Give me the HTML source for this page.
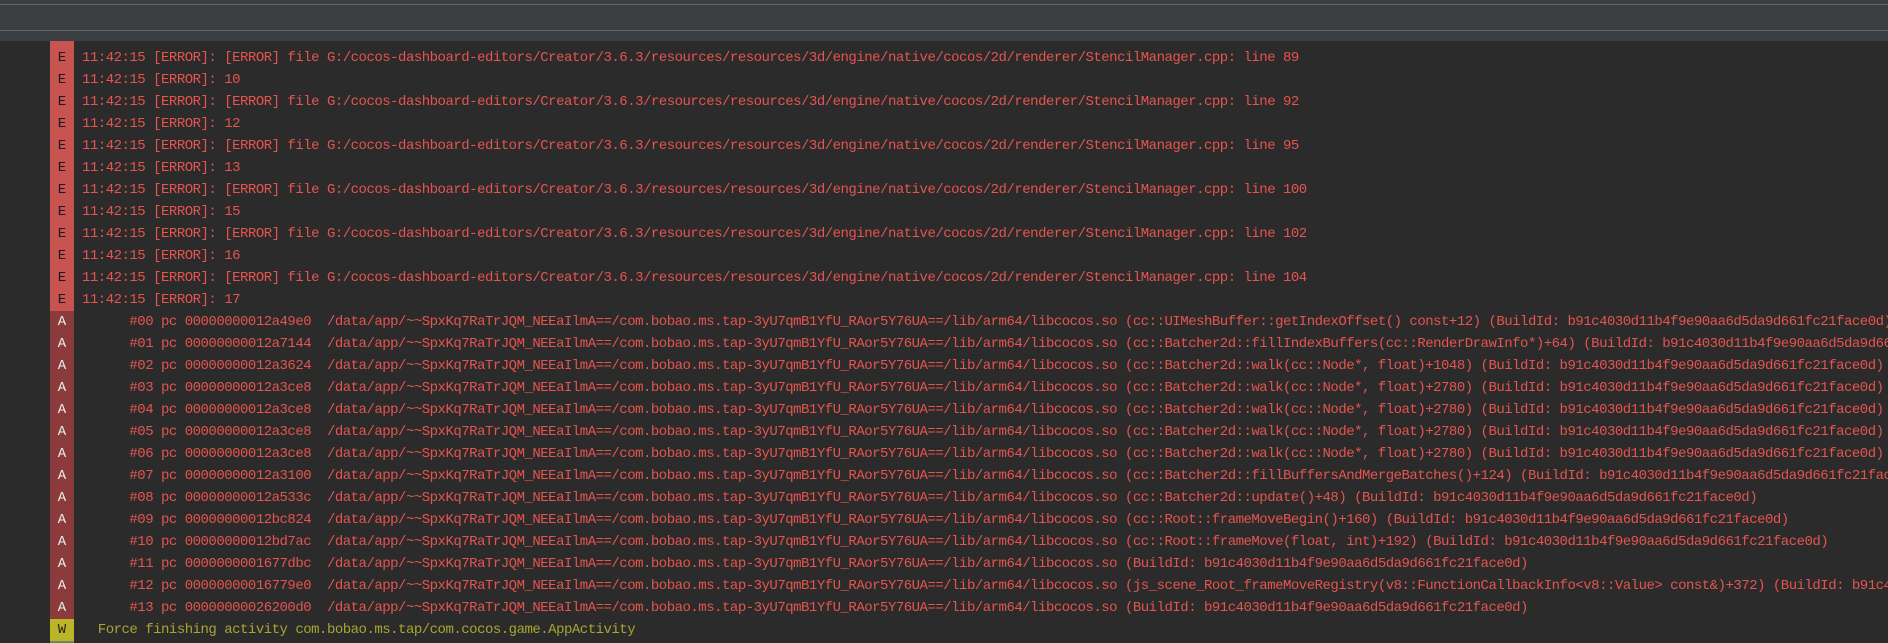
<!DOCTYPE html>
<html><head><style>
html,body{margin:0;padding:0;width:1888px;height:643px;overflow:hidden;background:#2b2b2b}
.hdr{position:absolute;left:0;top:0;width:1888px;height:41px;background:#3c3f41}
.l1{position:absolute;left:0;top:4px;width:1888px;height:1px;background:#626465}
.l2{position:absolute;left:0;top:30px;width:1888px;height:1px;background:#626465}
.rows{position:absolute;left:0;top:47px;width:1888px;overflow:hidden}
.r{height:22px;line-height:22px;white-space:pre;font-family:"Liberation Mono",monospace;font-size:14px;letter-spacing:-0.5px;color:#e5544f;position:relative;overflow:hidden;width:1888px}
.g{position:absolute;left:50px;width:24px;top:0;height:22px;text-align:center;font-size:14px;letter-spacing:0}
.t{position:absolute;left:82px;top:0}
.E .g{background:#c75450;color:#1a1a1a}
.A .g{background:#8b3b3b;color:#eee}
.W .g{background:#bbb529;color:#222}
.W{color:#a9a531}
</style></head><body>
<div class="hdr"></div><div class="l1"></div><div class="l2"></div>
<div style="position:absolute;left:50px;top:41px;width:24px;height:6px;background:#c75450"></div>
<div style="position:absolute;left:50px;top:641px;width:24px;height:2px;background:#6a8759"></div>
<div class="rows">
<div class="r E"><span class="g">E</span><span class="t">11:42:15 [ERROR]: [ERROR] file G:/cocos-dashboard-editors/Creator/3.6.3/resources/resources/3d/engine/native/cocos/2d/renderer/StencilManager.cpp: line 89</span></div>
<div class="r E"><span class="g">E</span><span class="t">11:42:15 [ERROR]: 10</span></div>
<div class="r E"><span class="g">E</span><span class="t">11:42:15 [ERROR]: [ERROR] file G:/cocos-dashboard-editors/Creator/3.6.3/resources/resources/3d/engine/native/cocos/2d/renderer/StencilManager.cpp: line 92</span></div>
<div class="r E"><span class="g">E</span><span class="t">11:42:15 [ERROR]: 12</span></div>
<div class="r E"><span class="g">E</span><span class="t">11:42:15 [ERROR]: [ERROR] file G:/cocos-dashboard-editors/Creator/3.6.3/resources/resources/3d/engine/native/cocos/2d/renderer/StencilManager.cpp: line 95</span></div>
<div class="r E"><span class="g">E</span><span class="t">11:42:15 [ERROR]: 13</span></div>
<div class="r E"><span class="g">E</span><span class="t">11:42:15 [ERROR]: [ERROR] file G:/cocos-dashboard-editors/Creator/3.6.3/resources/resources/3d/engine/native/cocos/2d/renderer/StencilManager.cpp: line 100</span></div>
<div class="r E"><span class="g">E</span><span class="t">11:42:15 [ERROR]: 15</span></div>
<div class="r E"><span class="g">E</span><span class="t">11:42:15 [ERROR]: [ERROR] file G:/cocos-dashboard-editors/Creator/3.6.3/resources/resources/3d/engine/native/cocos/2d/renderer/StencilManager.cpp: line 102</span></div>
<div class="r E"><span class="g">E</span><span class="t">11:42:15 [ERROR]: 16</span></div>
<div class="r E"><span class="g">E</span><span class="t">11:42:15 [ERROR]: [ERROR] file G:/cocos-dashboard-editors/Creator/3.6.3/resources/resources/3d/engine/native/cocos/2d/renderer/StencilManager.cpp: line 104</span></div>
<div class="r E"><span class="g">E</span><span class="t">11:42:15 [ERROR]: 17</span></div>
<div class="r A"><span class="g">A</span><span class="t">      #00 pc 00000000012a49e0  /data/app/~~SpxKq7RaTrJQM_NEEaIlmA==/com.bobao.ms.tap-3yU7qmB1YfU_RAor5Y76UA==/lib/arm64/libcocos.so (cc::UIMeshBuffer::getIndexOffset() const+12) (BuildId: b91c4030d11b4f9e90aa6d5da9d661fc21face0d)</span></div>
<div class="r A"><span class="g">A</span><span class="t">      #01 pc 00000000012a7144  /data/app/~~SpxKq7RaTrJQM_NEEaIlmA==/com.bobao.ms.tap-3yU7qmB1YfU_RAor5Y76UA==/lib/arm64/libcocos.so (cc::Batcher2d::fillIndexBuffers(cc::RenderDrawInfo*)+64) (BuildId: b91c4030d11b4f9e90aa6d5da9d661fc21face0d)</span></div>
<div class="r A"><span class="g">A</span><span class="t">      #02 pc 00000000012a3624  /data/app/~~SpxKq7RaTrJQM_NEEaIlmA==/com.bobao.ms.tap-3yU7qmB1YfU_RAor5Y76UA==/lib/arm64/libcocos.so (cc::Batcher2d::walk(cc::Node*, float)+1048) (BuildId: b91c4030d11b4f9e90aa6d5da9d661fc21face0d)</span></div>
<div class="r A"><span class="g">A</span><span class="t">      #03 pc 00000000012a3ce8  /data/app/~~SpxKq7RaTrJQM_NEEaIlmA==/com.bobao.ms.tap-3yU7qmB1YfU_RAor5Y76UA==/lib/arm64/libcocos.so (cc::Batcher2d::walk(cc::Node*, float)+2780) (BuildId: b91c4030d11b4f9e90aa6d5da9d661fc21face0d)</span></div>
<div class="r A"><span class="g">A</span><span class="t">      #04 pc 00000000012a3ce8  /data/app/~~SpxKq7RaTrJQM_NEEaIlmA==/com.bobao.ms.tap-3yU7qmB1YfU_RAor5Y76UA==/lib/arm64/libcocos.so (cc::Batcher2d::walk(cc::Node*, float)+2780) (BuildId: b91c4030d11b4f9e90aa6d5da9d661fc21face0d)</span></div>
<div class="r A"><span class="g">A</span><span class="t">      #05 pc 00000000012a3ce8  /data/app/~~SpxKq7RaTrJQM_NEEaIlmA==/com.bobao.ms.tap-3yU7qmB1YfU_RAor5Y76UA==/lib/arm64/libcocos.so (cc::Batcher2d::walk(cc::Node*, float)+2780) (BuildId: b91c4030d11b4f9e90aa6d5da9d661fc21face0d)</span></div>
<div class="r A"><span class="g">A</span><span class="t">      #06 pc 00000000012a3ce8  /data/app/~~SpxKq7RaTrJQM_NEEaIlmA==/com.bobao.ms.tap-3yU7qmB1YfU_RAor5Y76UA==/lib/arm64/libcocos.so (cc::Batcher2d::walk(cc::Node*, float)+2780) (BuildId: b91c4030d11b4f9e90aa6d5da9d661fc21face0d)</span></div>
<div class="r A"><span class="g">A</span><span class="t">      #07 pc 00000000012a3100  /data/app/~~SpxKq7RaTrJQM_NEEaIlmA==/com.bobao.ms.tap-3yU7qmB1YfU_RAor5Y76UA==/lib/arm64/libcocos.so (cc::Batcher2d::fillBuffersAndMergeBatches()+124) (BuildId: b91c4030d11b4f9e90aa6d5da9d661fc21face0d)</span></div>
<div class="r A"><span class="g">A</span><span class="t">      #08 pc 00000000012a533c  /data/app/~~SpxKq7RaTrJQM_NEEaIlmA==/com.bobao.ms.tap-3yU7qmB1YfU_RAor5Y76UA==/lib/arm64/libcocos.so (cc::Batcher2d::update()+48) (BuildId: b91c4030d11b4f9e90aa6d5da9d661fc21face0d)</span></div>
<div class="r A"><span class="g">A</span><span class="t">      #09 pc 00000000012bc824  /data/app/~~SpxKq7RaTrJQM_NEEaIlmA==/com.bobao.ms.tap-3yU7qmB1YfU_RAor5Y76UA==/lib/arm64/libcocos.so (cc::Root::frameMoveBegin()+160) (BuildId: b91c4030d11b4f9e90aa6d5da9d661fc21face0d)</span></div>
<div class="r A"><span class="g">A</span><span class="t">      #10 pc 00000000012bd7ac  /data/app/~~SpxKq7RaTrJQM_NEEaIlmA==/com.bobao.ms.tap-3yU7qmB1YfU_RAor5Y76UA==/lib/arm64/libcocos.so (cc::Root::frameMove(float, int)+192) (BuildId: b91c4030d11b4f9e90aa6d5da9d661fc21face0d)</span></div>
<div class="r A"><span class="g">A</span><span class="t">      #11 pc 0000000001677dbc  /data/app/~~SpxKq7RaTrJQM_NEEaIlmA==/com.bobao.ms.tap-3yU7qmB1YfU_RAor5Y76UA==/lib/arm64/libcocos.so (BuildId: b91c4030d11b4f9e90aa6d5da9d661fc21face0d)</span></div>
<div class="r A"><span class="g">A</span><span class="t">      #12 pc 00000000016779e0  /data/app/~~SpxKq7RaTrJQM_NEEaIlmA==/com.bobao.ms.tap-3yU7qmB1YfU_RAor5Y76UA==/lib/arm64/libcocos.so (js_scene_Root_frameMoveRegistry(v8::FunctionCallbackInfo&lt;v8::Value&gt; const&amp;)+372) (BuildId: b91c4030d11b4f9e90aa6d5da9d661fc21face0d)</span></div>
<div class="r A"><span class="g">A</span><span class="t">      #13 pc 00000000026200d0  /data/app/~~SpxKq7RaTrJQM_NEEaIlmA==/com.bobao.ms.tap-3yU7qmB1YfU_RAor5Y76UA==/lib/arm64/libcocos.so (BuildId: b91c4030d11b4f9e90aa6d5da9d661fc21face0d)</span></div>
<div class="r W"><span class="g">W</span><span class="t">  Force finishing activity com.bobao.ms.tap/com.cocos.game.AppActivity</span></div>
</div>
</body></html>
